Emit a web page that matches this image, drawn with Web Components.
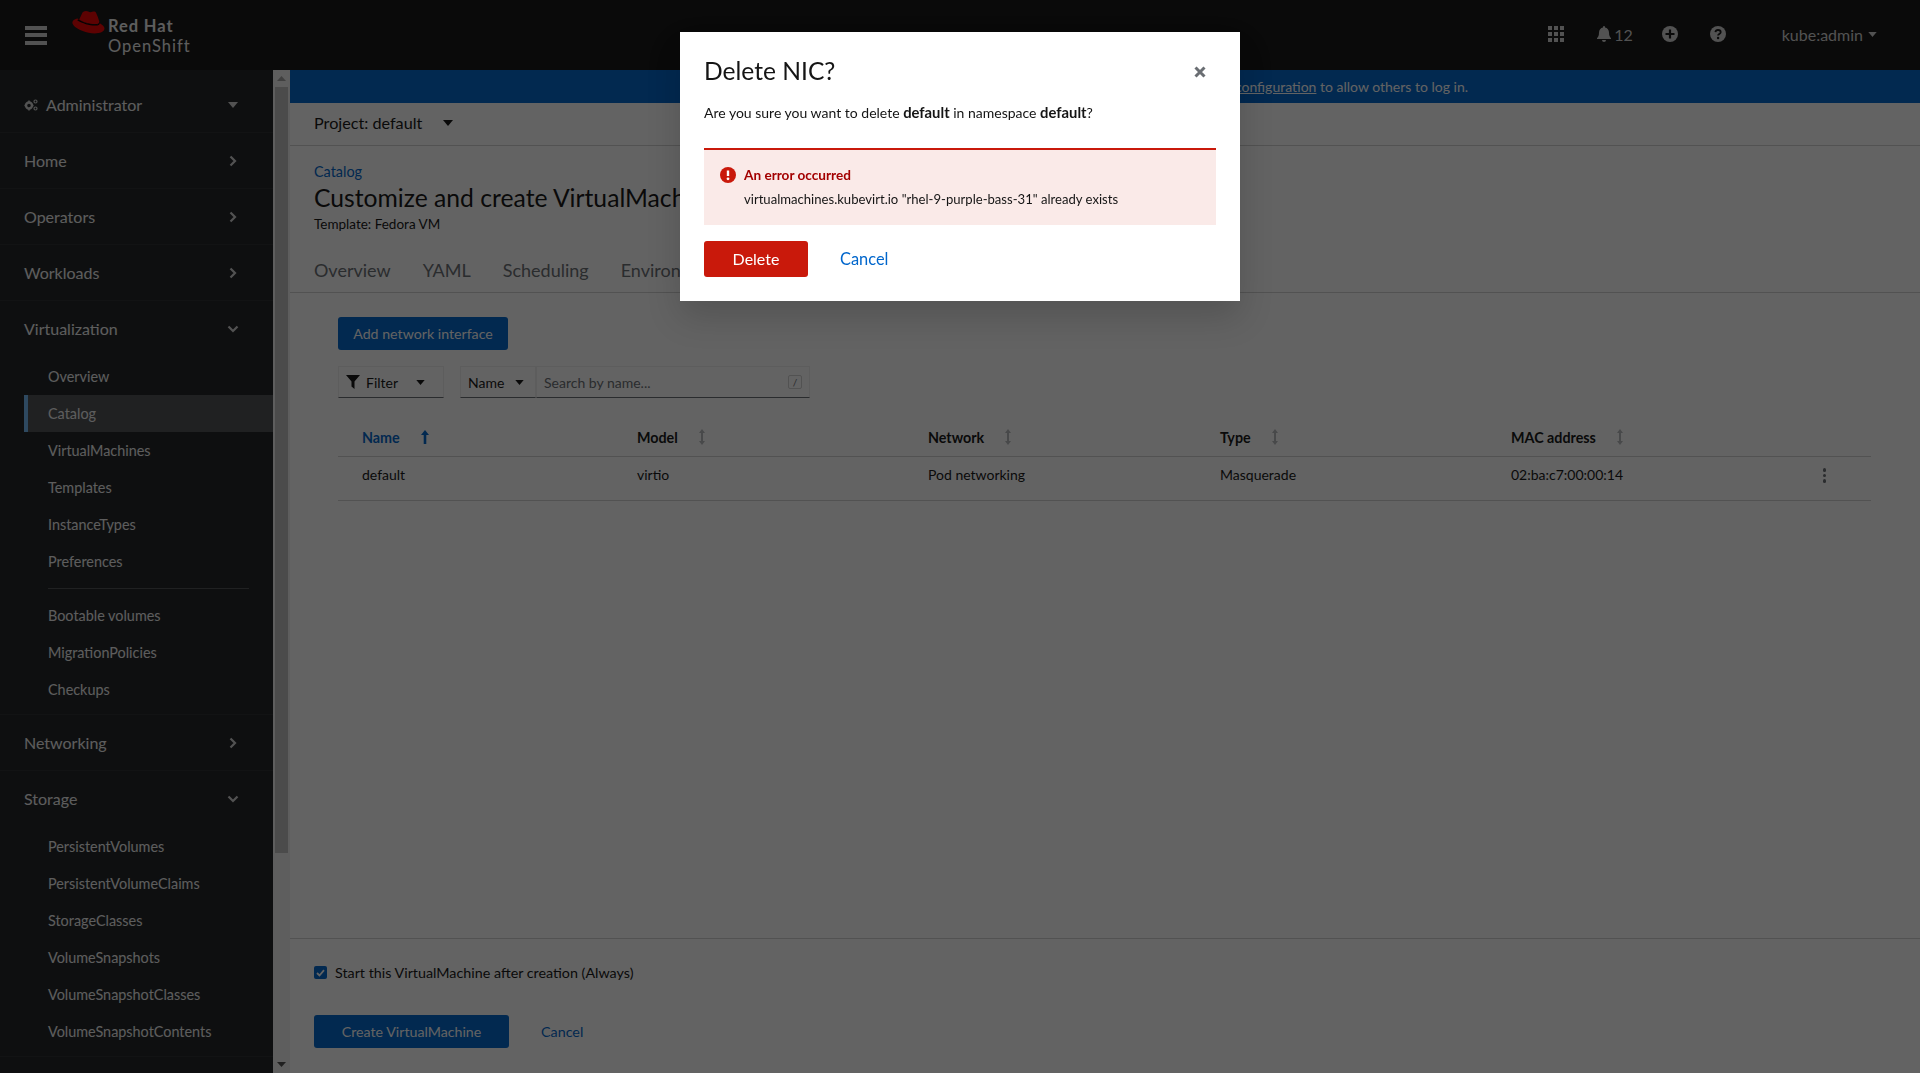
<!DOCTYPE html>
<html lang="en">
<head>
<meta charset="utf-8">
<title>Customize and create VirtualMachine</title>
<style>
  html, body { margin: 0; height: 100%; overflow: hidden; }
  body { font-family: Lato, "Liberation Sans", sans-serif; font-size: 14px; color: #151515; }
</style>
</head>
<body>
<app-shell></app-shell>

<script>
const icons = {
  caret: '<svg viewBox="0 0 10 6" width="10" height="6"><path d="M0 0h10L5 6z" fill="currentColor"/></svg>',
  small: '<svg viewBox="0 0 10 6" width="9" height="5"><path d="M0 0h10L5 6z" fill="currentColor"/></svg>',
  right: '<svg viewBox="0 0 8 12" width="8" height="12"><path d="M1.5 1.5 6 6l-4.5 4.5" fill="none" stroke="currentColor" stroke-width="2.2"/></svg>',
  down: '<svg class="dn" viewBox="0 0 12 8" width="12" height="8"><path d="M1.5 1.5 6 6l4.5-4.5" fill="none" stroke="currentColor" stroke-width="2.2"/></svg>',
  sort: '<svg viewBox="0 0 6 16" width="6" height="16"><path d="M3 0 6 4H4v8h2l-3 4-3-4h2V4H0z" fill="currentColor"/></svg>',
  up: '<svg viewBox="0 0 8 14" width="8" height="14"><path d="M4 0l4 5H5.3v9H2.7V5H0z" fill="currentColor"/></svg>'
};

class AppShell extends HTMLElement {
  constructor() {
    super();
    this.attachShadow({ mode: 'open' });
    this.shadowRoot.innerHTML = `
      <style>
        :host { display: flex; flex-direction: column; height: 1073px; overflow: hidden; }
        .row { display: flex; flex: 1; min-height: 0; }
      </style>
      <app-masthead></app-masthead>
      <div class="row">
        <app-sidebar></app-sidebar>
        <fake-scrollbar></fake-scrollbar>
        <vm-page></vm-page>
      </div>
      <delete-modal></delete-modal>
    `;
  }
}

class AppMasthead extends HTMLElement {
  constructor() {
    super();
    this.attachShadow({ mode: 'open' });
    this.shadowRoot.innerHTML = `
      <style>
        :host { display: flex; align-items: center; height: 70px; flex: none; background: #151515; color: #f0f0f0; }
        .burger { width: 22px; height: 19px; margin-left: 25px; display: flex; flex-direction: column; justify-content: space-between; }
        .burger i { display: block; height: 4px; background: #d2d2d2; }
        .logo { display: flex; margin-left: 25px; align-items: flex-start; margin-top: -5px; }
        .word { margin-left: 3px; font-size: 16.5px; line-height: 20px; margin-top: 6px; letter-spacing: 1px; color: #f0f0f0; }
        .word b { display: block; font-weight: 700; letter-spacing: .9px; }
        .tools { margin-left: auto; display: flex; align-items: center; color: #d2d2d2; margin-bottom: 2px; }
        .apps { display: grid; grid-template-columns: repeat(3, 4px); gap: 2px; margin-right: 33px; }
        .apps i { height: 4px; background: currentColor; }
        .bell { display: flex; align-items: center; gap: 3px; font-size: 16px; margin-right: 29px; }
        .tools > svg { display: block; }
        .plus { margin-right: 32px; }
        .help { margin-right: 56px; }
        .user { display: flex; align-items: center; gap: 5px; font-size: 16px; margin-right: 43px; }
      </style>
      <div class="burger"><i></i><i></i><i></i></div>
      <div class="logo">
        <svg width="33" height="25" viewBox="0 0 33 25">
          <path d="M5.5 8.5C2 9 0 11 .5 13.5c1 3.5 8 7.5 16 9.3 8 1.5 15.500.2 16-4 .2-2-2-4-5-5.800-1 4-13 2-22-4.500z" fill="#e00"/>
          <path d="M14 1c-2 0-3.500.7-4.200 3L7.200 9.500c4 3 12 5 17 4.500 3-.3 3.300-1.500 3-2.800C26.500 8.500 24.500 3 23.500 2c-1.500-1.300-3.500.2-5 .2C16.800 2.200 16 1 14 1z" fill="#e00"/>
          <path d="M6.500 9.300c5 3.700 14 6 18 5.300 2-.3 3-1 2.700-3.200 1 1.800.7 3.500-2 4-5 1-14-1.500-20-5.200z" fill="#000"/>
        </svg>
        <div class="word"><b>Red Hat</b>OpenShift</div>
      </div>
      <div class="tools">
        <div class="apps"><i></i><i></i><i></i><i></i><i></i><i></i><i></i><i></i><i></i></div>
        <div class="bell">
          <svg width="14" height="16" viewBox="0 0 14 16"><path d="M7 0a1 1 0 0 1 1 1v.6C10.400 2 12 4 12 6.500c0 3.500 1 4.500 2 5.700V13H0v-.8c1-1.200 2-2.200 2-5.700C2 4 3.600 2 6 1.600V1a1 1 0 0 1 1-1zM5 14h4a2 2 0 0 1-4 0z" fill="currentColor"/></svg>
          <span>12</span>
        </div>
        <svg class="plus" width="16" height="16" viewBox="0 0 16 16"><circle cx="8" cy="8" r="8" fill="currentColor"/><path d="M8 3.500v9M3.500 8h9" stroke="#151515" stroke-width="2.200"/></svg>
        <svg class="help" width="16" height="16" viewBox="0 0 16 16"><circle cx="8" cy="8" r="8" fill="currentColor"/><path d="M5.400 6.200C5.600 4.700 6.700 4 8 4c1.500 0 2.700.9 2.700 2.200 0 1.800-2.600 1.800-2.600 3.300" fill="none" stroke="#151515" stroke-width="1.800"/><circle cx="8.100" cy="12" r="1.200" fill="#151515"/></svg>
        <div class="user"><span>kube:admin</span>${icons.small}</div>
      </div>
    `;
  }
}

class NavGroup extends HTMLElement {
  constructor() {
    super();
    this.attachShadow({ mode: 'open' });
    const icon = this.getAttribute('icon') || 'right';
    this.shadowRoot.innerHTML = `
      <style>
        :host { display: block; border-bottom: 1px solid #2b2e31; }
        .head { display: flex; align-items: center; justify-content: space-between; height: 55px; padding: 0 36px 0 24px; font-size: 16px; color: #f0f0f0; }
        .head svg { color: #d2d2d2; display: block; }
        .head svg.dn { margin-right: -2px; }
        :host([open]) .kids { padding: 2px 0 6px; }
      </style>
      <div class="head"><span>${this.getAttribute('label')}</span>${icons[icon]}</div>
      <div class="kids"><slot></slot></div>
    `;
  }
}

class NavLink extends HTMLElement {
  constructor() {
    super();
    this.attachShadow({ mode: 'open' });
    this.shadowRoot.innerHTML = `
      <style>
        :host { display: block; height: 37px; line-height: 37px; margin-left: 24px; padding-left: 24px; font-size: 14.4px; color: #f0f0f0; }
        :host([active]) { background: #4f5255; box-shadow: inset 4px 0 0 #73bcf7; }
      </style>
      <slot></slot>
    `;
  }
}

class AppSidebar extends HTMLElement {
  constructor() {
    super();
    this.attachShadow({ mode: 'open' });
    this.shadowRoot.innerHTML = `
      <style>
        :host { display: block; width: 273px; flex: none; background: #212427; overflow: hidden; }
        .persp { display: flex; align-items: center; padding: 7px 35px 0 24px; height: 55px; font-size: 16px; color: #f0f0f0; border-bottom: 1px solid #2b2e31; }
        .persp svg { display: block; }
        .persp span { margin-left: 8px; flex: 1; }
        .persp .c { color: #d2d2d2; }
        hr { border: 0; border-top: 1px solid #4f5255; margin: 8px 24px 8px 48px; height: 0; }
      </style>
      <div class="persp">
        <svg width="14" height="12" viewBox="0 0 14 12"><circle cx="5" cy="6.500" r="3" fill="none" stroke="#d2d2d2" stroke-width="2.400"/><circle cx="11.500" cy="2.500" r="1.500" fill="none" stroke="#d2d2d2" stroke-width="1.200"/><circle cx="11.500" cy="9.500" r="1.500" fill="none" stroke="#d2d2d2" stroke-width="1.200"/><path d="M5 1.500v1.500M5 10v1.500M.5 6.500H2M8 6.500h1.500" stroke="#d2d2d2" stroke-width="1.600"/></svg>
        <span>Administrator</span>
        <div class="c">${icons.caret}</div>
      </div>
      <nav-group label="Home"></nav-group>
      <nav-group label="Operators"></nav-group>
      <nav-group label="Workloads"></nav-group>
      <nav-group label="Virtualization" icon="down" open>
        <nav-link>Overview</nav-link>
        <nav-link active>Catalog</nav-link>
        <nav-link>VirtualMachines</nav-link>
        <nav-link>Templates</nav-link>
        <nav-link>InstanceTypes</nav-link>
        <nav-link>Preferences</nav-link>
        <hr>
        <nav-link>Bootable volumes</nav-link>
        <nav-link>MigrationPolicies</nav-link>
        <nav-link>Checkups</nav-link>
      </nav-group>
      <nav-group label="Networking"></nav-group>
      <nav-group label="Storage" icon="down" open>
        <nav-link>PersistentVolumes</nav-link>
        <nav-link>PersistentVolumeClaims</nav-link>
        <nav-link>StorageClasses</nav-link>
        <nav-link>VolumeSnapshots</nav-link>
        <nav-link>VolumeSnapshotClasses</nav-link>
        <nav-link>VolumeSnapshotContents</nav-link>
      </nav-group>
    `;
  }
}

class FakeScrollbar extends HTMLElement {
  constructor() {
    super();
    this.attachShadow({ mode: 'open' });
    this.shadowRoot.innerHTML = `
      <style>
        :host { display: flex; flex-direction: column; align-items: center; width: 17px; flex: none; background: #f1f1f1; }
        .arr { height: 17px; flex: none; display: flex; align-items: center; justify-content: center; color: #a3a3a3; }
        .thumb { width: 13px; height: 766px; background: #c1c1c1; flex: none; }
        .sp { flex: 1; }
        .dn { color: #505050; }
        svg { display: block; }
      </style>
      <div class="arr"><svg width="9" height="5" viewBox="0 0 9 5"><path d="M0 5h9L4.500 0z" fill="currentColor"/></svg></div>
      <div class="thumb"></div>
      <div class="sp"></div>
      <div class="arr dn"><svg width="9" height="5" viewBox="0 0 9 5"><path d="M0 0h9L4.500 5z" fill="currentColor"/></svg></div>
    `;
  }
}

class BlueButton extends HTMLElement {
  constructor() {
    super();
    this.attachShadow({ mode: 'open' });
    this.shadowRoot.innerHTML = `
      <style>
        :host { display: inline-flex; align-items: center; justify-content: center; height: 33px; box-sizing: border-box; border-radius: 3px; background: #06c; color: #fff; font-size: 14.2px; }
      </style>
      <slot></slot>
    `;
  }
}

class NicToolbar extends HTMLElement {
  constructor() {
    super();
    this.attachShadow({ mode: 'open' });
    this.shadowRoot.innerHTML = `
      <style>
        :host { display: flex; height: 32px; font-size: 14px; color: #151515; }
        .box { display: flex; align-items: center; box-sizing: border-box; height: 32px; border: 1px solid #f0f0f0; border-bottom-color: #6a6e73; }
        .filter { width: 106px; padding-left: 7px; gap: 6px; }
        .filter .lbl { width: 44px; }
        .name { width: 76px; margin-left: 16px; padding-left: 7px; gap: 8px; }
        .name .lbl { width: 39px; }
        .search { width: 274px; padding: 0 7px; justify-content: space-between; border-left: 1px solid #f0f0f0; color: #6a6e73; }
        .key { width: 14px; height: 14px; border: 1px solid #d2d2d2; border-radius: 2px; font-size: 10px; line-height: 12px; text-align: center; box-sizing: border-box; }
        svg { display: block; flex: none; }
      </style>
      <div class="box filter">
        <svg width="14" height="14" viewBox="0 0 14 14"><path d="M0 0h14L8.500 6.500V14L5.500 11.500v-5z" fill="#151515"/></svg>
        <span class="lbl">Filter</span>${icons.small}
      </div>
      <div class="box name"><span class="lbl">Name</span>${icons.small}</div>
      <div class="box search"><span>Search by name...</span><span class="key">/</span></div>
    `;
  }
}

class NicTable extends HTMLElement {
  constructor() {
    super();
    this.attachShadow({ mode: 'open' });
    const cols = ['Model', 'Network', 'Type', 'MAC address'];
    this.shadowRoot.innerHTML = `
      <style>
        :host { display: block; font-size: 14px; color: #151515; }
        .row { display: grid; grid-template-columns: 275px 291px 292px 291px 1fr; border-bottom: 1px solid #d2d2d2; position: relative; align-items: center; box-sizing: border-box; }
        .head { height: 44px; padding-top: 5px; font-weight: 700; font-size: 14.3px; }
        .body { height: 44px; padding-bottom: 8px; }
        .row > div { padding-left: 24px; display: flex; align-items: center; gap: 21px; }
        .row svg { display: block; color: #b8bbbe; }
        .sel { color: #06c; }
        .row .sel svg { color: #06c; }
        .kebab { position: absolute; right: 45px; top: 11px; display: flex; flex-direction: column; gap: 2px; }
        .kebab i { width: 3.5px; height: 3.5px; border-radius: 50%; background: #6a6e73; }
      </style>
      <div class="row head">
        <div class="sel">Name ${icons.up}</div>
        ${cols.map(c => `<div>${c} ${icons.sort}</div>`).join('')}
      </div>
      <div class="row body">
        <div>default</div><div>virtio</div><div>Pod networking</div><div>Masquerade</div><div>02:ba:c7:00:00:14</div>
        <span class="kebab"><i></i><i></i><i></i></span>
      </div>
    `;
  }
}

class VmPage extends HTMLElement {
  constructor() {
    super();
    this.attachShadow({ mode: 'open' });
    this.shadowRoot.innerHTML = `
      <style>
        :host { display: flex; flex-direction: column; flex: 1; min-width: 0; background: #fff; }
        .banner { height: 33px; flex: none; box-sizing: border-box; padding: 0 452px 1px 0; background: #06c; color: #fff; display: flex; align-items: center; justify-content: flex-end; font-size: 14px; }
        .project { height: 42px; flex: none; box-sizing: content-box; border-bottom: 1px solid #d2d2d2; display: flex; align-items: center; padding-left: 24px; font-size: 16.2px; gap: 21px; }
        .project span { margin-bottom: 4px; }
        .project svg { margin-bottom: 3px; }
        .head { padding: 17px 24px 0; flex: none; }
        .crumb { color: #06c; font-size: 14.4px; line-height: 17px; }
        h1 { margin: 3px 0 0; font-weight: 400; font-size: 24.7px; line-height: 30px; white-space: nowrap; }
        .tpl { font-size: 13.5px; line-height: 17px; margin-top: 3px; }
        .tabs { display: flex; gap: 32px; margin-top: 18px; height: 42px; padding: 0 0 3px 24px; border-bottom: 1px solid #d2d2d2; flex: none; box-sizing: border-box; font-size: 18px; color: #6a6e73; align-items: center; white-space: nowrap; overflow: hidden; }
        .content { flex: 1; padding: 24px 49px 0 48px; min-height: 0; }
        nic-toolbar { margin-top: 16px; }
        nic-table { margin-top: 15px; }
        .foot { height: 135px; flex: none; box-sizing: border-box; border-top: 1px solid #d2d2d2; padding: 25px 24px 0; }
        .check { display: flex; align-items: center; gap: 8px; height: 17px; font-size: 14.3px; }
        .box { width: 13px; height: 13px; border-radius: 2px; background: #06c; display: flex; align-items: center; justify-content: center; }
        .actions { display: flex; align-items: center; margin-top: 34px; }
        .actions a { color: #06c; margin-left: 32px; font-size: 14.3px; }
        svg { display: block; }
      </style>
      <div class="banner"><span>cluster OAuth <u>configuration</u> to allow others to log in.</span></div>
      <div class="project"><span>Project: default</span>${icons.caret}</div>
      <div class="head">
        <div class="crumb">Catalog</div>
        <h1>Customize and create VirtualMachine</h1>
        <div class="tpl">Template: Fedora VM</div>
      </div>
      <div class="tabs"><span>Overview</span><span>YAML</span><span>Scheduling</span><span>Environment</span></div>
      <div class="content">
        <blue-button style="width:170px">Add network interface</blue-button>
        <nic-toolbar></nic-toolbar>
        <nic-table></nic-table>
      </div>
      <div class="foot">
        <div class="check">
          <span class="box"><svg width="9" height="8" viewBox="0 0 9 8"><path d="M1 4l2.500 2.500L8 1.200" fill="none" stroke="#fff" stroke-width="1.800"/></svg></span>
          <span>Start this VirtualMachine after creation (Always)</span>
        </div>
        <div class="actions">
          <blue-button style="width:195px">Create VirtualMachine</blue-button>
          <a>Cancel</a>
        </div>
      </div>
    `;
  }
}

class DeleteModal extends HTMLElement {
  constructor() {
    super();
    this.attachShadow({ mode: 'open' });
    this.shadowRoot.innerHTML = `
      <style>
        :host { position: fixed; inset: 0; background: rgba(3, 3, 3, .62); display: flex; justify-content: center; align-items: flex-start; padding-top: 32px; box-sizing: border-box; }
        .dlg { position: relative; width: 560px; height: 269px; box-sizing: border-box; background: #fff; padding: 24px; box-shadow: 0 16px 32px rgba(3,3,3,.16); }
        h2 { margin: 0; font-weight: 400; font-size: 24.6px; line-height: 30px; color: #151515; }
        .close { position: absolute; right: 34px; top: 34px; display: block; }
        p { margin: 18px 0 0; font-size: 14px; line-height: 17px; color: #151515; }
        p b { font-size: 14.8px; }
        .alert { margin-top: 27px; height: 77px; box-sizing: border-box; border-top: 2px solid #c9190b; background: #faeae8; padding: 17px 16px 0; display: grid; grid-template-columns: 16px 1fr; grid-auto-rows: min-content; column-gap: 8px; }
        .alert svg { display: block; margin-top: 0; }
        .alert b { color: #a30000; font-weight: 700; font-size: 13.6px; line-height: 17px; }
        .alert span { grid-column: 2; margin-top: 7px; font-size: 13.1px; line-height: 17px; color: #151515; white-space: nowrap; }
        .acts { display: flex; align-items: center; margin-top: 16px; }
        .del { width: 104px; height: 36px; box-sizing: border-box; padding-bottom: 2px; border-radius: 3px; background: #c9190b; color: #fff; font-size: 16px; display: flex; align-items: center; justify-content: center; }
        a { color: #06c; font-size: 16.4px; margin: 0 0 2px 32px; }
      </style>
      <div class="dlg" role="dialog">
        <h2>Delete NIC?</h2>
        <svg class="close" width="12" height="12" viewBox="0 0 12 12"><path d="M1.500 1.500l9 9M10.500 1.500l-9 9" stroke="#6a6e73" stroke-width="3"/></svg>
        <p>Are you sure you want to delete <b>default</b> in namespace <b>default</b>?</p>
        <div class="alert">
          <svg width="16" height="16" viewBox="0 0 16 16"><circle cx="8" cy="8" r="8" fill="#c9190b"/><path d="M8 3.500v5.500" stroke="#fff" stroke-width="2.400"/><circle cx="8" cy="11.800" r="1.400" fill="#fff"/></svg>
          <b>An error occurred</b>
          <span>virtualmachines.kubevirt.io "rhel-9-purple-bass-31" already exists</span>
        </div>
        <div class="acts"><div class="del">Delete</div><a>Cancel</a></div>
      </div>
    `;
  }
}

customElements.define('blue-button', BlueButton);
customElements.define('nav-link', NavLink);
customElements.define('nav-group', NavGroup);
customElements.define('fake-scrollbar', FakeScrollbar);
customElements.define('app-masthead', AppMasthead);
customElements.define('app-sidebar', AppSidebar);
customElements.define('nic-toolbar', NicToolbar);
customElements.define('nic-table', NicTable);
customElements.define('vm-page', VmPage);
customElements.define('delete-modal', DeleteModal);
customElements.define('app-shell', AppShell);
</script>
</body>
</html>
